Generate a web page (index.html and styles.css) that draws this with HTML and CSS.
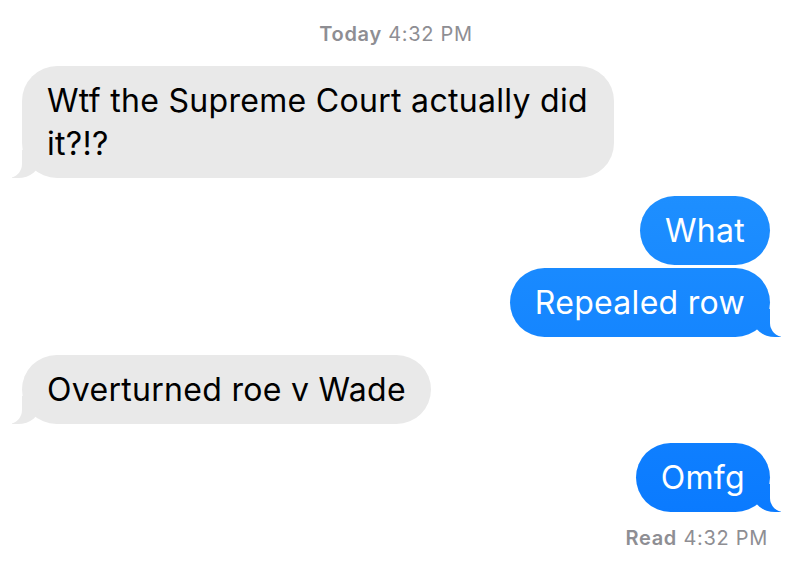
FILE: index.html
```html
<!DOCTYPE html>
<html lang="en">
  <head>
    <meta charset="UTF-8" />
    <meta name="viewport" content="width=device-width, initial-scale=1.0" />
    <title>Messages</title>
    <link rel="stylesheet" href="styles.css">
  </head>
  <body>
    <div class="thread">
      <div class="stamp"><b>Today</b> 4:32 PM</div>

      <div class="msg them tail">Wtf the Supreme Court actually did it?!?</div>

      <div class="msg me">What</div>
      <div class="msg me tail">Repealed row</div>

      <div class="msg them tail">Overturned roe v Wade</div>

      <div class="msg me tail last">Omfg</div>

      <div class="receipt"><b>Read</b> 4:32 PM</div>
    </div>
  </body>
</html>
```

FILE: styles.css
```css
body {
  margin: 0;
  background: #fff;
  font-family: Inter, "Liberation Sans", Arial, sans-serif;
}
.thread {
  display: flex;
  flex-direction: column;
  padding: 22px 40px 20px 22px;
}
.stamp {
  align-self: center;
  font-size: 20px;
  line-height: 24px;
  letter-spacing: 0.7px;
  color: #8e8e93;
  margin-bottom: 20px;
}
.stamp b,
.receipt b {
  font-weight: 600;
}
.msg {
  position: relative;
  box-sizing: border-box;
  font-size: 32px;
  line-height: 43px;
  letter-spacing: 0.3px;
  padding: 13px 25px;
  border-radius: 35px;
  max-width: 592px;
  margin-top: 18px;
}
.stamp + .msg {
  margin-top: 0;
}
.msg.me + .msg.me {
  margin-top: 3px;
}
.msg.last {
  margin-top: 19px;
}
.them {
  align-self: flex-start;
  background: #e9e9e9;
  color: #000;
}
.me {
  align-self: flex-end;
  color: #fff;
  background: linear-gradient(#1e8fff 190px, #0a7aff 520px) fixed;
}

/* tails */
.tail::before,
.tail::after {
  content: "";
  position: absolute;
  bottom: 0;
  height: 28px;
}
.them.tail::before {
  left: -10px;
  width: 28px;
  background: #e9e9e9;
  border-bottom-right-radius: 22px 18px;
}
.them.tail::after {
  left: -36px;
  width: 36px;
  background: #fff;
  border-bottom-right-radius: 14px;
}
.me.tail::before {
  right: -11px;
  width: 28px;
  background: linear-gradient(#1e8fff 190px, #0a7aff 520px) fixed;
  border-bottom-left-radius: 22px 18px;
}
.me.tail::after {
  right: -36px;
  width: 36px;
  background: #fff;
  border-bottom-left-radius: 14px;
}
.receipt {
  align-self: flex-end;
  font-size: 20px;
  line-height: 24px;
  letter-spacing: 0.7px;
  color: #8e8e93;
  margin-top: 14px;
  margin-right: 2px;
}
```
